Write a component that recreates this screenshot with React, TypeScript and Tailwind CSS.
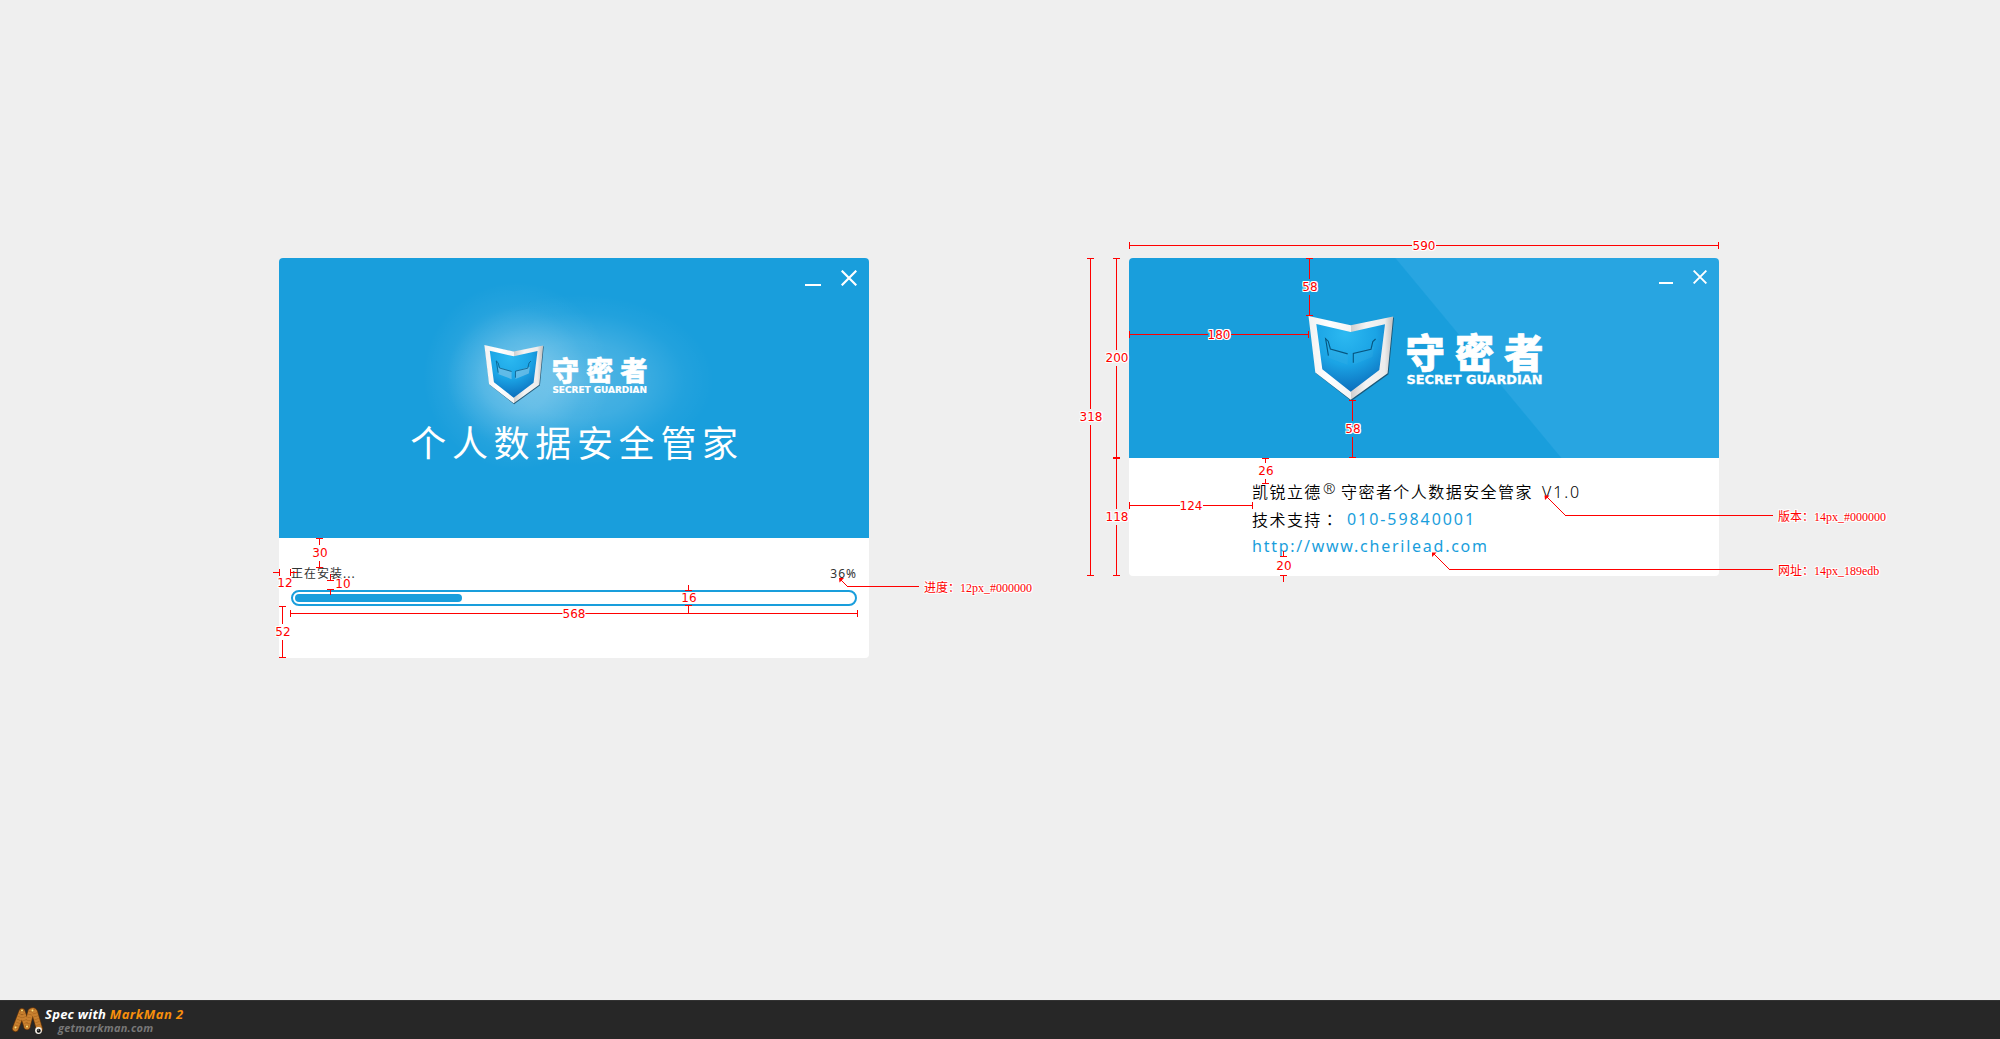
import type { ReactNode } from "react";

const CJK = "font-['Noto_Sans','Noto_Sans_CJK_SC',sans-serif]";

function Logo({ className, uid, eyes }: { className: string; uid: string; eyes: number }) {
  return (
    <svg className={className} viewBox="0 0 236 86" fill="none">
      <defs>
        <linearGradient id={uid + "l"} x1="0" y1="0" x2="1" y2="0">
          <stop offset="0" stopColor="#f2f2f2" />
          <stop offset="0.25" stopColor="#ffffff" />
          <stop offset="0.5" stopColor="#f4f4f4" />
          <stop offset="0.5" stopColor="#cfcfcf" />
          <stop offset="0.68" stopColor="#f4f4f4" />
          <stop offset="0.9" stopColor="#ececec" />
          <stop offset="1" stopColor="#bdbdbd" />
        </linearGradient>
        <radialGradient id={uid + "f"} cx="0.42" cy="0.15" r="0.9">
          <stop offset="0" stopColor="#2cb9f1" />
          <stop offset="0.5" stopColor="#1ba4e5" />
          <stop offset="1" stopColor="#0a68b8" />
        </radialGradient>
      </defs>
      <path d="M1.3 1L43.3 10L86 1.6L80.5 58.2L43.3 85L8 57.2Z" fill="#1b4c68" opacity="0.85" />
      <path d="M.5 0L42.7 9.2L85.2.6L79.6 57.2L42.7 83.8L7.3 56.4Z" fill={"url(#" + uid + "l)"} />
      <path d="M8.3 8L42.7 16L77 8.3L71.3 54L42.7 75.7L14.3 53.3Z" fill={"url(#" + uid + "f)"} />
      <path d="M20 32L39.7 38V49L21 42ZM45.3 37.5L66 31L64.5 41L45.3 48.8Z" fill="#8cc8e8" opacity={eyes} />
      <path
        d="M20.4 39.6L17.6 22.7L20.2 25.2L22.4 33L39.7 37.9M45.3 46.8V37.5L63 33.2L64.8 25.6L67.6 23"
        stroke="#07557f"
        strokeWidth="1.1"
      />
      <text
        x="97.5"
        y="51.7"
        fontSize="39.5"
        fontWeight="900"
        fontFamily="'Noto Sans CJK SC',sans-serif"
        fill="#fff"
        stroke="#fff"
        strokeWidth="0.7"
        textLength="138"
      >
        守密者
      </text>
      <text
        x="98.5"
        y="68.3"
        fontSize="12.6"
        fontWeight="700"
        fontFamily="'DejaVu Sans',sans-serif"
        fill="#fff"
        stroke="#fff"
        strokeWidth="0.3"
        textLength="136"
        lengthAdjust="spacingAndGlyphs"
      >
        SECRET GUARDIAN
      </text>
    </svg>
  );
}

function Controls({ size, className }: { size: number; className: string }) {
  return (
    <div className={"flex items-end " + className}>
      <div className="h-0.5 bg-white" style={{ width: size }} />
      <svg width={size} height={size} viewBox="0 0 16 16" stroke="#fff" strokeWidth="2.2">
        <path d="M.7.7L15.3 15.3M15.3.7L.7 15.3" />
      </svg>
    </div>
  );
}

function InstallWindow() {
  return (
    <section className="flex h-[400px] w-[590px] flex-col overflow-hidden rounded-[4px] bg-white">
      <div className="flex h-[280px] flex-col items-center bg-[#199edc] bg-[radial-gradient(circle_94px_at_238px_118px,rgba(255,255,255,0.28),rgba(255,255,255,0.21)_38%,rgba(255,255,255,0.05)_74%,transparent),radial-gradient(ellipse_135px_86px_at_300px_122px,rgba(255,255,255,0.24),rgba(255,255,255,0.16)_45%,rgba(255,255,255,0.04)_78%,transparent)]">
        <Controls size={16} className="mt-3 mr-3 h-4 gap-5 self-end" />
        <Logo className="mt-[59px] mr-[17px] h-[60px] w-[164px] shrink-0" uid="a" eyes={0.6} />
        <h1 className="mt-[10px] ml-[6px] font-['Noto_Sans_CJK_SC',sans-serif] text-[36px] leading-[52px] font-normal tracking-[5.7px] whitespace-nowrap text-white">
          个人数据安全管家
        </h1>
      </div>
      <div className="flex flex-col px-3 pt-[27px]">
        <div className={"flex h-[18px] justify-between text-[12px] leading-[18px] tracking-[1px] text-[#333] " + CJK}>
          <span>正在安装...</span>
          <span>36%</span>
        </div>
        <div className="mt-[7px] h-4 w-[566px] rounded-full border-2 border-[#199edc] p-0.5">
          <div className="h-2 w-[167px] rounded-full bg-[#199edc]" />
        </div>
      </div>
    </section>
  );
}

function AboutWindow() {
  return (
    <section className="flex h-[318px] w-[590px] flex-col overflow-hidden rounded-[4px] bg-white">
      <div className="flex h-[200px] flex-col bg-[linear-gradient(50.3deg,#199edc_57.1%,#28a5e1_57.3%)]">
        <Controls size={14} className="mt-3 mr-3 h-[14px] gap-5 self-end" />
        <Logo className="mt-8 ml-[179px] h-[86px] w-[236px]" uid="b" eyes={0.08} />
      </div>
      <div
        className={"pt-[21px] pl-[123px] text-[16px] leading-[27px] font-[350] tracking-[1.45px] whitespace-nowrap text-black " + CJK}
      >
        <p className="flex h-[27px]">
          <span className="w-[71px]">凯锐立德</span>
          <span className="-mt-1 w-[18px] text-[15px] font-light tracking-normal">®</span>
          <span>守密者个人数据安全管家</span>
          <span className="ml-[9px] tracking-[1.9px]">V1.0</span>
        </p>
        <p className="flex h-[27px]">
          <span className="w-[95px] font-['Noto_Sans_CJK_TC',sans-serif]">技术支持：</span>
          <span className="font-normal tracking-[1.93px] text-[#199edc]">010-59840001</span>
        </p>
        <p className="font-normal tracking-[1.75px] text-[#199edc]">http://www.cherilead.com</p>
      </div>
    </section>
  );
}

/* Dimension lines: end caps plus shaft, drawn over the windows. */
const LINES = [
  "M316 538.5h7M319.5 539v6M319.5 561v6M316 567.5h7",
  "M273 572.5h6M279.5 569v7M290.5 569v7M291 572.5h6",
  "M330.5 574v6M327 580.5h7M327 589.5h7M330.5 590v5",
  "M290.5 610v7M291 613.5h272M585 613.5h272M857.5 610v7",
  "M279 606.5h7M282.5 607v17M282.5 640v17M279 657.5h7",
  "M688.5 585v5M685 590.5h7M685 605.5h7M688.5 606v7",
  "M1129.5 242v7M1130 245.5h282M1436 245.5h282M1718.5 242v7",
  "M1087 258.5h7M1090.5 259v150M1090.5 425v150M1087 575.5h7",
  "M1113 258.5h7M1116.5 259v91M1116.5 366v92M1113 457.5h7",
  "M1113 458.5h7M1116.5 459v50M1116.5 525v50M1113 575.5h7",
  "M1306 258.5h7M1309.5 259v20M1309.5 295v20M1306 315.5h7",
  "M1129.5 331v7M1130 334.5h78M1231 334.5h77M1308.5 331v7",
  "M1349 400.5h7M1352.5 401v20M1352.5 437v20M1349 457.5h7",
  "M1262 458.5h7M1265.5 459v4M1265.5 479v4M1262 483.5h7",
  "M1129.5 502v7M1130 505.5h50M1203 505.5h49M1252.5 502v7",
  "M1283.5 551v5M1280 556.5h7M1280 575.5h7M1283.5 576v6",
];

const VALUES: [string, number, number][] = [
  ["30", 320, 553],
  ["12", 285, 583],
  ["10", 343, 584],
  ["568", 574, 614],
  ["52", 283, 632],
  ["16", 689, 598],
  ["590", 1424, 246],
  ["318", 1091, 417],
  ["200", 1117, 358],
  ["118", 1117, 517],
  ["58", 1310, 287],
  ["180", 1219, 335],
  ["58", 1353, 429],
  ["26", 1266, 471],
  ["124", 1191, 506],
  ["20", 1284, 566],
];

const NOTES: [string, number, number][] = [
  ["进度：12px_#000000", 924, 588],
  ["版本：14px_#000000", 1778, 517],
  ["网址：14px_189edb", 1778, 571],
];

const HALO =
  "[text-shadow:1px_0_#fff,-1px_0_#fff,0_1px_#fff,0_-1px_#fff,1px_1px_#fff,-1px_-1px_#fff,1px_-1px_#fff,-1px_1px_#fff]";

function Label({ x, y, className, children }: { x: number; y: number; className: string; children: ReactNode }) {
  return (
    <span className={"absolute leading-4 whitespace-nowrap " + HALO + " " + className} style={{ left: x, top: y - 8 }}>
      {children}
    </span>
  );
}

function Annotations() {
  return (
    <div className="pointer-events-none absolute inset-0">
      <svg className="absolute inset-0" width="2000" height="1000" fill="none" stroke="#f00">
        <path d={LINES.join("")} shapeRendering="crispEdges" />
        <path d="M840 579L847.5 586.5M1546 496L1565.5 515.5M1433 553L1449.5 569.5" />
        <path d="M847 586.5H918.5M1565 515.5H1772.5M1449 569.5H1772.5" shapeRendering="crispEdges" />
        <path d="M839 578h5l-4.5 4.5zM1544.5 495.5h5l-4.5 4.5zM1432 552.5h4.5l-4.5 4.5z" fill="#f00" stroke="none" />
      </svg>
      {VALUES.map(([t, x, y]) => (
        <Label key={t + x + y} x={x} y={y} className="-translate-x-1/2 font-['DejaVu_Sans',sans-serif] text-[12px] text-[#f00]">
          {t}
        </Label>
      ))}
      {NOTES.map(([t, x, y]) => (
        <Label key={t} x={x} y={y} className="font-['Liberation_Serif','Noto_Sans_CJK_SC',serif] text-[12px] text-[#f00]">
          {t}
        </Label>
      ))}
    </div>
  );
}

function WormIcon() {
  const left = "M4.5 22.5L11 5.5L16 20.5";
  const right = "M16 20.5L20 5.5Q22 3.5 23.5 6L28.5 23";
  return (
    <svg className="h-[30px] w-[34px]" viewBox="0 0 34 30" fill="none" strokeLinecap="round" strokeLinejoin="round">
      <g stroke="#6b390c" strokeWidth="6.8">
        <path d={left} />
        <path d={right} />
      </g>
      <g stroke="#c9802f" strokeWidth="5.4">
        <path d={left} />
        <path d={right} />
      </g>
      <g stroke="#8f5417" strokeWidth="4.4" strokeLinecap="butt" strokeDasharray="0.5 2.5" opacity="0.7">
        <path d={left} />
        <path d={right} />
      </g>
      <g fill="#ffe27a">
        <circle cx="11" cy="4.5" r="1" />
        <circle cx="21.5" cy="4.5" r="1" />
        <circle cx="4.5" cy="21.5" r="1" />
        <circle cx="16" cy="20.5" r="1" />
      </g>
      <circle cx="27.5" cy="24.5" r="3.4" fill="#f4efe6" />
      <circle cx="27.7" cy="24.7" r="2" fill="#111" />
      <circle cx="27.2" cy="24" r="0.6" fill="#fff" />
    </svg>
  );
}

export default function App() {
  return (
    <div className="relative flex h-[1039px] w-[2000px] flex-col overflow-hidden bg-[#efefef]">
      <main className="flex flex-1 items-start gap-[260px] pt-[258px] pl-[279px]">
        <InstallWindow />
        <AboutWindow />
      </main>
      <footer className="flex h-[39px] items-start border-t border-[#333] bg-[#272727] pt-[5px] pl-[11px] font-['Open_Sans','Noto_Sans',sans-serif] font-bold italic">
        <WormIcon />
        <div className="flex flex-col">
          <span className="h-[15px] text-[13px] leading-[17px] tracking-[0.25px] whitespace-nowrap text-white">
            Spec with <span className="tracking-[0.5px] text-[#f78f0c]">MarkMan 2</span>
          </span>
          <span className="pl-[13px] text-[11px] leading-[14px] tracking-[0.25px] text-[#777]">getmarkman.com</span>
        </div>
      </footer>
      <Annotations />
    </div>
  );
}
